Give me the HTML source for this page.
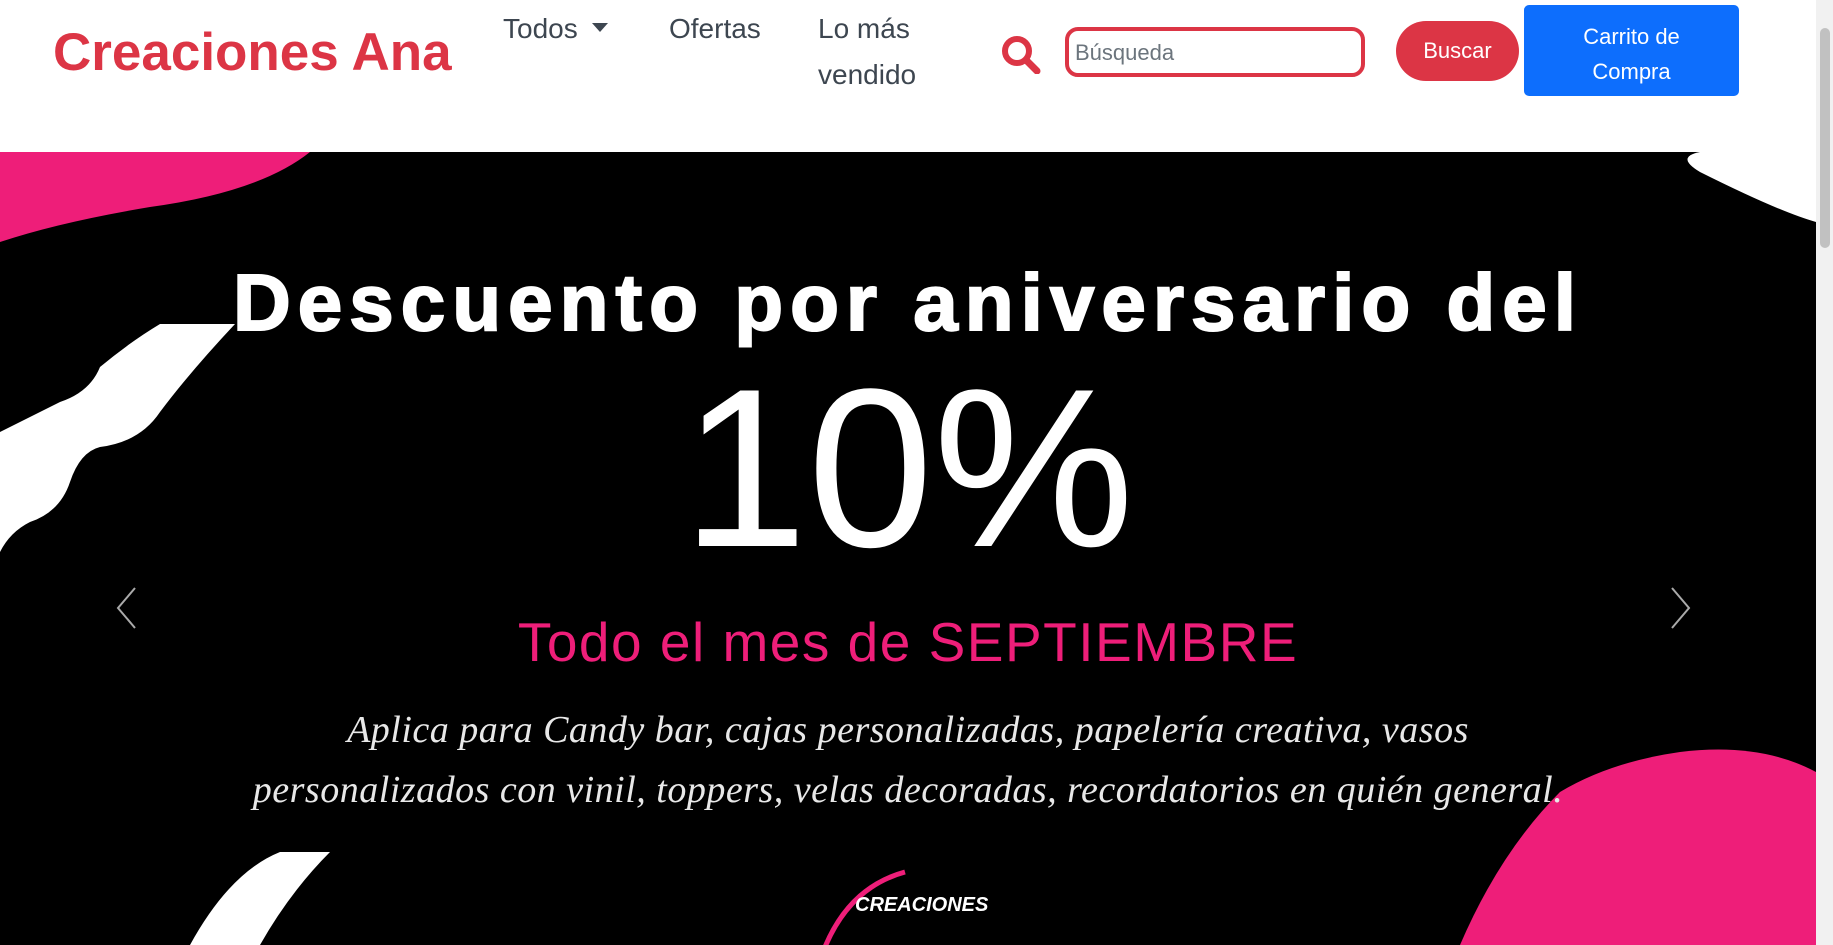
<!DOCTYPE html>
<html><head><meta charset="utf-8"><style>
*{margin:0;padding:0;box-sizing:border-box}
body{width:1833px;height:945px;overflow:hidden;background:#fff;font-family:"Liberation Sans",sans-serif;position:relative}
.abs{position:absolute}
.logo{left:53px;top:22px;font-size:53px;font-weight:bold;color:#dc3545;white-space:nowrap}
.nav{font-size:28px;color:#3d4650;line-height:46px}
.inp{left:1065px;top:27px;width:300px;height:50px;border:4px solid #dc3545;border-radius:13px;font-size:22px;color:#6c757d;padding:9px 6px}
.bus{left:1396px;top:21px;width:123px;height:60px;background:#dc3545;border-radius:30px;color:#fff;font-size:22px;text-align:center;line-height:60px}
.car{left:1524px;top:5px;width:215px;height:91px;background:#0d6efd;border-radius:5px;color:#fff;font-size:22px;text-align:center;line-height:35px;padding-top:14px}
.sb{left:1816px;top:0;width:17px;height:945px;background:#f1f1f1}
.thumb{left:1820px;top:28px;width:10px;height:220px;background:#c1c1c1;border-radius:5px}
.ban{left:0;top:152px;width:1816px;height:793px;background:#000;overflow:hidden}
</style></head><body>
<div class="abs logo">Creaciones Ana</div>
<div class="abs nav" style="left:503px;top:6px">Todos <span style="display:inline-block;width:0;height:0;border-left:8px solid transparent;border-right:8px solid transparent;border-top:9px solid #3d4650;vertical-align:middle;margin-left:6px;margin-top:-6px"></span></div>
<div class="abs nav" style="left:669px;top:6px">Ofertas</div>
<div class="abs nav" style="left:818px;top:6px">Lo más<br>vendido</div>
<svg class="abs" style="left:1000px;top:34px" width="42" height="40" viewBox="0 0 42 40"><circle cx="17" cy="17" r="12" fill="none" stroke="#dc3545" stroke-width="6"/><line x1="26" y1="26" x2="37" y2="37" stroke="#dc3545" stroke-width="7" stroke-linecap="round"/></svg>
<div class="abs inp">Búsqueda</div>
<div class="abs bus">Buscar</div>
<div class="abs car">Carrito de<br>Compra</div>
<div class="abs ban">
<svg width="1816" height="793" style="position:absolute;left:0;top:0">
<path d="M0 0 L310 0 Q260 40 150 55 Q60 70 0 90 Z" fill="#ee1e79"/>
<path d="M1700 0 L1816 0 L1816 70 Q1780 60 1700 20 Q1675 5 1700 0Z" fill="#fff"/>
<path d="M1816 720 L1816 793 L1460 793 Q1500 700 1560 640 Q1610 610 1680 600 Q1760 590 1816 620Z" fill="#ee1e79"/>
<path d="M0 280 Q40 260 60 250 Q90 240 100 215 Q130 190 160 172 L235 172 Q190 220 160 260 Q140 290 100 295 Q80 300 70 330 Q60 360 30 370 Q10 380 0 400 Z" fill="#fff"/>
<path d="M190 793 Q230 720 280 700 L330 700 Q290 740 260 793Z" fill="#fff"/>
<path d="M825 795 Q850 735 905 720" fill="none" stroke="#ee1e79" stroke-width="5"/>
</svg>
<div class="abs" style="left:0;width:1816px;top:105px;text-align:center;color:#fff;font-size:80px;font-weight:900;letter-spacing:7px;-webkit-text-stroke:2px #fff">Descuento por aniversario del</div>
<div class="abs" style="left:0;width:1816px;top:186px;text-align:center;color:#fff;font-size:226px;font-weight:normal;line-height:260px">10%</div>
<div class="abs" style="left:0;width:1816px;top:458px;text-align:center;color:#ee1e79;font-size:55px;letter-spacing:1.5px">Todo el mes de SEPTIEMBRE</div>
<div class="abs" style="left:0;width:1816px;top:548px;text-align:center;color:#e8e8e8;font-family:'Liberation Serif',serif;font-style:italic;font-size:38px;line-height:60px;letter-spacing:0.5px">Aplica para Candy bar, cajas personalizadas, papelería creativa, vasos<br>personalizados con vinil, toppers, velas decoradas, recordatorios en quién general.</div>
<div class="abs" style="left:855px;top:742px;color:#fff;font-size:20px;font-weight:bold;font-style:italic">CREACIONES</div>
<svg class="abs" style="left:115px;top:434px" width="24" height="44"><path d="M20 2 L3 22 L20 42" fill="none" stroke="#aaa" stroke-width="2"/></svg>
<svg class="abs" style="left:1668px;top:434px" width="24" height="44"><path d="M4 2 L21 22 L4 42" fill="none" stroke="#aaa" stroke-width="2"/></svg>
</div>
<div class="abs sb"></div><div class="abs thumb"></div>
</body></html>
